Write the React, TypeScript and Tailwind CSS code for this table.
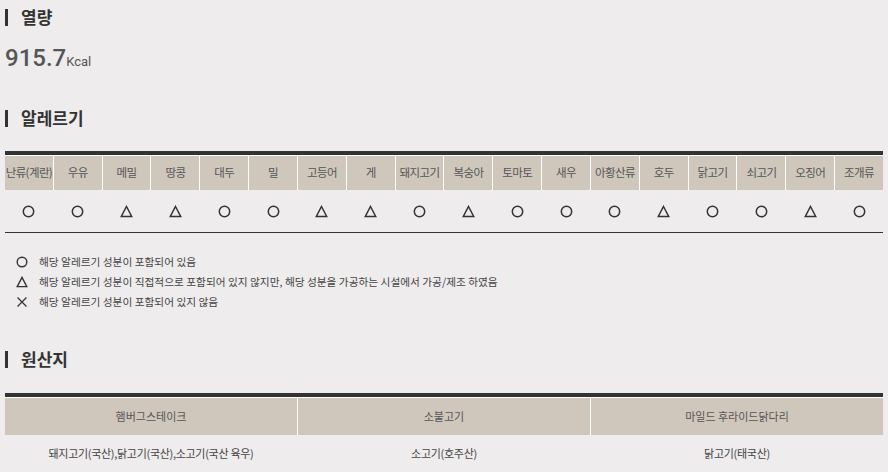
import React from "react";

type Mark = "o" | "t" | "x";

const ALLERGENS: { name: string; mark: Mark }[] = [
  { name: "난류(계란)", mark: "o" },
  { name: "우유", mark: "o" },
  { name: "메밀", mark: "t" },
  { name: "땅콩", mark: "t" },
  { name: "대두", mark: "o" },
  { name: "밀", mark: "o" },
  { name: "고등어", mark: "t" },
  { name: "게", mark: "t" },
  { name: "돼지고기", mark: "o" },
  { name: "복숭아", mark: "t" },
  { name: "토마토", mark: "o" },
  { name: "새우", mark: "o" },
  { name: "아황산류", mark: "o" },
  { name: "호두", mark: "t" },
  { name: "닭고기", mark: "o" },
  { name: "쇠고기", mark: "o" },
  { name: "오징어", mark: "t" },
  { name: "조개류", mark: "o" },
];

const ORIGINS = [
  { menu: "햄버그스테이크", origin: "돼지고기(국산),닭고기(국산),소고기(국산 육우)" },
  { menu: "소불고기", origin: "소고기(호주산)" },
  { menu: "마일드 후라이드닭다리", origin: "닭고기(태국산)" },
];

function Symbol({ mark, size = 13 }: { mark: Mark; size?: number }) {
  return (
    <svg width={size} height={size} viewBox="0 0 14 14" fill="none" stroke="#333" strokeWidth="1.6">
      {mark === "o" && <circle cx="7" cy="7" r="5.6" />}
      {mark === "t" && <path d="M7 1.6 L12.6 12.4 H1.4 Z" strokeLinejoin="miter" />}
      {mark === "x" && <path d="M1.8 1.8 L12.2 12.2 M12.2 1.8 L1.8 12.2" strokeWidth="1.4" />}
    </svg>
  );
}

function Heading({ children }: { children: React.ReactNode }) {
  return (
    <h2 className="flex items-center h-[18px] text-[17px] font-bold text-[#333]">
      <span className="w-[3px] h-[17px] bg-[#333] mr-[13px]" />
      {children}
    </h2>
  );
}

export default function App() {
  const font = { fontFamily: '"Noto Sans CJK KR", "Noto Sans", sans-serif' };

  return (
    <div className="min-h-[472px] bg-[#eeecec] px-[5px] pt-[8px] text-[#444]" style={font}>
      {/* 열량 */}
      <Heading>열량</Heading>
      <div className="mt-[20px] flex items-baseline text-[#555] leading-none">
        <span className="text-[24px] font-medium" style={{ fontFamily: "Roboto, sans-serif" }}>915.7</span>
        <span className="text-[13px]" style={{ fontFamily: "Roboto, sans-serif" }}>Kcal</span>
      </div>

      {/* 알레르기 */}
      <div className="mt-[39px]">
        <Heading>알레르기</Heading>
      </div>
      <div className="mt-[24px] border-t-4 border-[#333] border-b border-b-[#333]">
        <div className="grid grid-cols-[repeat(18,minmax(0,1fr))] gap-x-px bg-white pt-px">
          {ALLERGENS.map((a) => (
            <div
              key={a.name}
              className="h-[34px] bg-[#cfc7bc] flex items-center justify-center text-[11.5px] tracking-[-0.6px] text-[#555] whitespace-nowrap"
            >
              {a.name}
            </div>
          ))}
        </div>
        <div className="grid grid-cols-[repeat(18,minmax(0,1fr))] gap-x-px">
          {ALLERGENS.map((a) => (
            <div key={a.name} className="h-[42px] flex items-center justify-center">
              <Symbol mark={a.mark} />
            </div>
          ))}
        </div>
      </div>

      {/* 범례 */}
      <ul className="mt-[19px] pl-[11px] flex flex-col text-[10.7px] text-[#444]">
        {[
          { mark: "o" as Mark, text: "해당 알레르기 성분이 포함되어 있음" },
          { mark: "t" as Mark, text: "해당 알레르기 성분이 직접적으로 포함되어 있지 않지만, 해당 성분을 가공하는 시설에서 가공/제조 하였음" },
          { mark: "x" as Mark, text: "해당 알레르기 성분이 포함되어 있지 않음" },
        ].map((l) => (
          <li key={l.mark} className="h-[20px] flex items-center gap-[11px]">
            <Symbol mark={l.mark} size={12} />
            <span>{l.text}</span>
          </li>
        ))}
      </ul>

      {/* 원산지 */}
      <div className="mt-[38px]">
        <Heading>원산지</Heading>
      </div>
      <div className="mt-[25px] border-t-4 border-[#333] border-b border-b-[#333]">
        <div className="grid grid-cols-3 gap-x-px bg-white pt-px">
          {ORIGINS.map((o) => (
            <div key={o.menu} className="h-[37px] bg-[#cfc7bc] flex items-center justify-center text-[11px] text-[#555]">
              {o.menu}
            </div>
          ))}
        </div>
        <div className="grid grid-cols-3 gap-x-px">
          {ORIGINS.map((o) => (
            <div key={o.menu} className="h-[37px] flex items-center justify-center text-[11px] tracking-[-0.3px] text-[#444]">
              {o.origin}
            </div>
          ))}
        </div>
      </div>
    </div>
  );
}
